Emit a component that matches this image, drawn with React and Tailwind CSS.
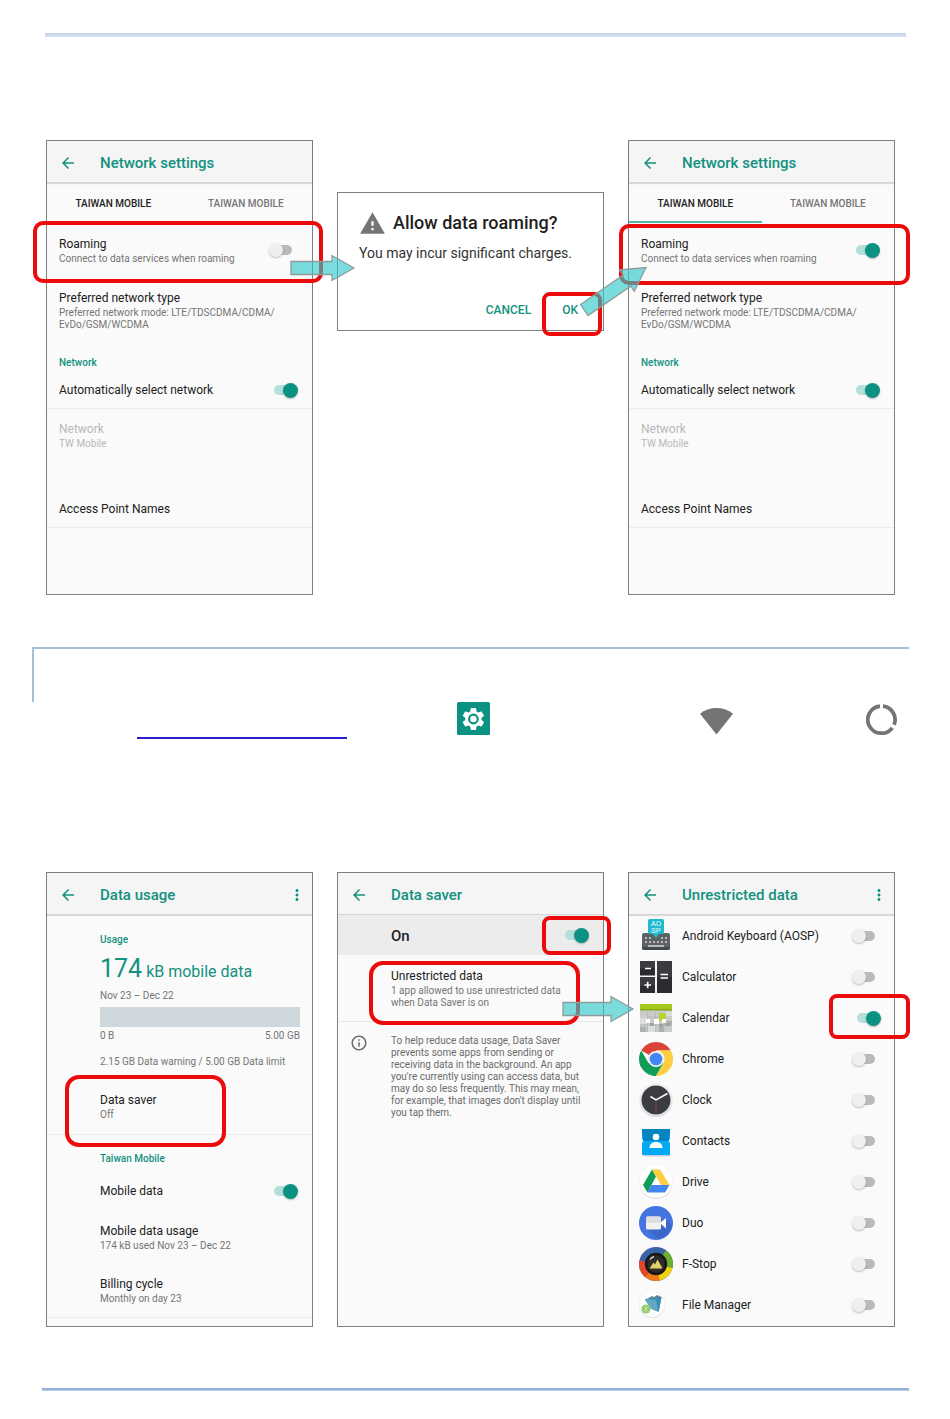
import React, { useState } from "react";
import { MdArrowBack, MdMoreVert, MdWarning, MdInfoOutline } from "react-icons/md";

const Switch = ({ on = false, label }) => {
  const [checked, setChecked] = useState(on);

  return (
    <input
      type="checkbox"
      role="switch"
      aria-label={label}
      checked={checked}
      onChange={(e) => setChecked(e.target.checked)}
      className="relative h-4 w-[30px] shrink-0 appearance-none before:absolute before:left-[5px] before:top-[3px] before:h-[10px] before:w-[18px] before:rounded-full before:bg-[#bababa] before:content-[''] checked:before:bg-[#b5dfda] after:absolute after:left-0 after:top-px after:h-[14px] after:w-[14px] after:rounded-full after:bg-[#efefef] after:shadow-[0_1px_2px_rgba(0,0,0,0.25)] after:content-[''] checked:after:left-[14px] checked:after:h-[15px] checked:after:w-[15px] checked:after:bg-[#0b9283]"
    />
  );
};

// Red frame around the part of the screen to tap
const Callout = ({ className }) => (
  <span className={`pointer-events-none absolute z-10 border-4 border-[#ec0b0b] ${className}`} />
);

const Arrow = ({ className, width, height, points }) => (
  <svg
    className={`pointer-events-none absolute z-20 ${className}`}
    width={width}
    height={height}
    viewBox={`0 0 ${width} ${height}`}
    aria-hidden="true"
  >
    <polygon points={points} fill="#2cc8c8" fillOpacity="0.63" stroke="#8f9c9c" strokeWidth="1.3" />
  </svg>
);

const Screen = ({ title, menu, children }) => (
  <section className="relative border border-[#7f7f7f] bg-[#fafafa]">
    <header className="flex h-[42px] items-center border-b border-[#d6d6d6] bg-[#f5f5f5] pl-3 pr-[6px] pt-[2px] text-[#12917f] shadow-[0_1px_1px_rgba(0,0,0,0.12)]">
      <button type="button" aria-label="Back">
        <MdArrowBack size={18} />
      </button>
      <h2 className="ml-[23px] flex-1 text-[15px] font-medium leading-5">{title}</h2>
      {menu && (
        <button type="button" aria-label="More options">
          <MdMoreVert size={18} />
        </button>
      )}
    </header>
    {children}
  </section>
);

const Item = ({ title, sub, muted }) => (
  <span className="block flex-1">
    <span className={`block text-[12px] leading-4 ${muted ? "text-[#b8b8b8]" : "text-[#212121]"}`}>{title}</span>
    {sub && (
      <span className={`mt-px block text-[10px] leading-3 ${muted ? "text-[#b8b8b8]" : "text-[#757575]"}`}>{sub}</span>
    )}
  </span>
);

const NetworkSettings = ({ roaming, underline, callout, children }) => (
  <Screen title="Network settings">
    <div className="flex h-10 text-[10px]" role="tablist">
      <button
        type="button"
        role="tab"
        aria-selected="true"
        className={`flex-1 border-b-2 pt-[3px] font-medium text-[#212121] ${underline ? "border-[#55b3a8]" : "border-transparent"}`}
      >
        TAIWAN MOBILE
      </button>
      <button
        type="button"
        role="tab"
        aria-selected="false"
        className="flex-1 border-b-2 border-transparent pt-[3px] font-medium text-[#757575]"
      >
        TAIWAN MOBILE
      </button>
    </div>
    <label className="relative flex h-[54px] items-center pl-3 pr-[13px]">
      <Item title="Roaming" sub="Connect to data services when roaming" />
      <Switch on={roaming} label="Roaming" />
      <Callout className={callout} />
      {children}
    </label>
    <div className="flex h-[66px] items-center px-3">
      <Item
        title="Preferred network type"
        sub={
          <>
            Preferred network mode: LTE/TDSCDMA/CDMA/
            <br />
            EvDo/GSM/WCDMA
          </>
        }
      />
    </div>
    <h3 className="px-3 pt-3 text-[10px] font-medium leading-4 text-[#12917f]">Network</h3>
    <label className="flex h-[38px] items-center border-b border-[#ececec] pl-3 pr-[13px]">
      <Item title="Automatically select network" />
      <Switch on label="Automatically select network" />
    </label>
    <div className="flex h-[52px] items-center px-3">
      <Item title="Network" sub="TW Mobile" muted />
    </div>
    <div className="mb-[66px] mt-[30px] flex h-[37px] items-center border-b border-[#ececec] px-3">
      <Item title="Access Point Names" />
    </div>
  </Screen>
);

const RoamingDialog = () => (
  <section className="relative mt-[52px] self-start border border-[#7f7f7f] bg-white pb-3 pl-[21px] pt-4">
    <div className="flex items-center gap-[7px]">
      <MdWarning size={27} className="text-[#757575]" />
      <h2 className="text-[18px] font-medium leading-7 text-[#212121]">Allow data roaming?</h2>
    </div>
    <p className="mt-[6px] text-[14px] leading-5 text-[#333333]">You may incur significant charges.</p>
    <div className="mt-[39px] flex justify-end gap-[31px] pr-[25px] text-[12px] font-medium leading-4 text-[#12917f]">
      <button type="button">CANCEL</button>
      <button type="button">OK</button>
    </div>
    <Callout className="-bottom-[6px] right-px h-[44px] w-[60px] rounded-lg" />
    <Arrow
      className="-right-[45px] top-[71px]"
      width={70}
      height={54}
      points="2.5,40.5 45.2,11.1 41.6,5.8 68,3.5 56.3,27.3 52.8,22.1 10,51.5"
    />
  </section>
);

const DataUsage = () => (
  <Screen title="Data usage" menu>
    <div className="pl-[53px] pr-3 pt-[17px] text-[10px] leading-3 text-[#757575]">
      <h3 className="font-medium leading-4 text-[#12917f]">Usage</h3>
      <p className="mt-2 h-8 whitespace-nowrap text-[16px] leading-8 text-[#12917f]">
        <span className="text-[25px] leading-none">174</span> kB mobile data
      </p>
      <p className="mt-[2px]">Nov 23 – Dec 22</p>
      <div className="mt-[5px] h-5 bg-[#cfd8dc]" />
      <div className="mt-[3px] flex justify-between">
        <span>0 B</span>
        <span>5.00 GB</span>
      </div>
      <p className="mt-[14px] whitespace-nowrap">2.15 GB Data warning / 5.00 GB Data limit</p>
    </div>
    <div className="relative mt-[10px] flex h-[57px] items-center border-b border-[#ececec] pl-[53px]">
      <Item title="Data saver" sub="Off" />
      <Callout className="-bottom-[13px] -top-[3px] left-[18px] w-[161px] rounded-[14px]" />
    </div>
    <h3 className="pb-[5px] pl-[53px] pt-4 text-[10px] font-medium leading-4 text-[#12917f]">Taiwan Mobile</h3>
    <label className="flex h-[38px] items-center pl-[53px] pr-[13px]">
      <Item title="Mobile data" />
      <Switch on label="Mobile data" />
    </label>
    <div className="flex h-[54px] items-center pl-[53px]">
      <Item title="Mobile data usage" sub="174 kB used Nov 23 – Dec 22" />
    </div>
    <div className="mb-2 flex h-[54px] items-center border-b border-[#ececec] pl-[53px]">
      <Item title="Billing cycle" sub="Monthly on day 23" />
    </div>
  </Screen>
);

const DataSaver = () => (
  <Screen title="Data saver">
    <label className="relative flex h-10 items-center bg-[#ececec] pl-[53px] pr-[13px]">
      <span className="flex-1 pt-px text-[15px] font-medium leading-5 text-[#212121]">On</span>
      <Switch on label="Data saver" />
      <Callout className="-right-2 bottom-0 top-px w-[69px] rounded-lg" />
    </label>
    <div className="relative flex h-[67px] items-center border-b border-[#e6e6e6] pl-[53px]">
      <Item
        title="Unrestricted data"
        sub={
          <>
            1 app allowed to use unrestricted data
            <br />
            when Data Saver is on
          </>
        }
      />
      <Callout className="-bottom-1 left-[31px] right-[23px] top-[6px] rounded-[14px]" />
      <Arrow
        className="-right-[32px] top-[40px]"
        width={73}
        height={28}
        points="1,7.5 49,7.5 49,1.5 71,14 49,26.5 49,20.5 1,20.5"
      />
    </div>
    <div className="flex items-start gap-[23px] pl-3 pt-[13px] text-[#6b6b6b]">
      <MdInfoOutline size={18} className="-mt-px shrink-0" />
      <p className="text-[10px] leading-3">
        To help reduce data usage, Data Saver
        <br />
        prevents some apps from sending or
        <br />
        receiving data in the background. An app
        <br />
        you're currently using can access data, but
        <br />
        may do so less frequently. This may mean,
        <br />
        for example, that images don't display until
        <br />
        you tap them.
      </p>
    </div>
  </Screen>
);

const icons = {
  keyboard: (
    <>
      <rect x="3" y="14" width="28" height="17" rx="2" fill="#5d6163" />
      <path d="M3 28h28v1a2 2 0 0 1-2 2H5a2 2 0 0 1-2-2z" fill="#46494b" />
      <g fill="#b4b8ba">
        <path d="M6 18h2v2H6zM10 18h2v2h-2zM22 18h2v2h-2zM26 18h2v2h-2zM6 22h2v2H6zM10 22h2v2h-2zM14 22h2v2h-2zM18 22h2v2h-2zM22 22h2v2h-2zM26 22h2v2h-2z" />
        <rect x="9" y="26" width="16" height="2" />
      </g>
      <path d="M11 0h12a2 2 0 0 1 2 2v11a2 2 0 0 1-2 2h-3l-3 4-3-4h-3a2 2 0 0 1-2-2V2a2 2 0 0 1 2-2z" fill="#1fb9d0" />
      <g fill="#e6fbff" fontFamily="Roboto, sans-serif" fontSize="8" textAnchor="middle">
        <text x="17" y="7">AO</text>
        <text x="17" y="14">SP</text>
      </g>
    </>
  ),
  calculator: (
    <>
      <rect x="1" y="1" width="32" height="32" fill="#3a3b40" />
      <path d="M1 8h15v8H1zM18 17h15v16H18zM1 26h15v7H1z" fill="#2b2c30" />
      <path d="M16 1h2v32h-2zM1 15.500h15v1.500H1z" fill="#f4f4f4" />
      <path d="M6 8.500h6M5.500 25h6.500M8.700 21.800v6.500M21.500 14.500h7.500M21.500 18h7.500" stroke="#fff" strokeWidth="1.600" />
    </>
  ),
  calendar: (
    <>
      <rect x="1" y="3" width="32" height="28" fill="#c9cbc9" />
      <path d="M1 15h8v8H1zM23 11h10v6H23zM9 24h8v7H9z" fill="#dcdedc" />
      <path d="M1 26h6v5H1zM25 20h8v5h-8zM20 25h5v6h-5z" fill="#aeb1ae" />
      <path d="M1 3h32v6H1z" fill="#a4c81e" />
      <path d="M1 8h32v1.500H1z" fill="#86a714" />
      <path d="M8.500 9v22M16.500 9v22M25 9v22M1 16h32M1 24h32" stroke="#b4b7b4" strokeWidth="0.800" />
      <path d="M20 12h7v8h-7z" fill="#b5d331" />
      <path d="M7 18h4v4H7zM15 18h5v5h-5zM23 18h4v4h-4z" fill="#fff" />
      <path d="M11 22h4v3h-4zM20 23h4v3h-4zM27 22h4v3h-4z" fill="#a0a4a0" />
    </>
  ),
  chrome: (
    <>
      <circle cx="17" cy="17" r="17" fill="#fff" />
      <path d="M17 17 2.280 8.500A17 17 0 0 1 31.720 8.500H17z" fill="#db4437" />
      <path d="M2.280 8.500A17 17 0 0 0 17 34l7.400-12.800L17 17l-7.400 4.200z" fill="#0f9d58" />
      <path d="M31.720 8.500A17 17 0 0 1 17 34l7.400-12.800A8.500 8.500 0 0 0 17 8.500z" fill="#ffcd40" />
      <circle cx="17" cy="17" r="8" fill="#f1f1f1" />
      <circle cx="17" cy="17" r="6.300" fill="#4285f4" />
    </>
  ),
  clock: (
    <>
      <circle cx="17" cy="17.500" r="16.500" fill="#d5d8e0" />
      <circle cx="17" cy="16.500" r="16" fill="#eceef3" />
      <circle cx="17" cy="17" r="14.500" fill="#3b3d42" />
      <path d="M17 17v12" stroke="#a63a3a" strokeWidth="0.900" />
      <path d="m11.500 13.500 5.500 3.500 11.500-6.500" fill="none" stroke="#fff" strokeWidth="1.500" />
    </>
  ),
  contacts: (
    <>
      <path d="M4 29h27v2a1.500 1.500 0 0 1-1.500 1.500h-24A1.500 1.500 0 0 1 4 31z" fill="#c9cbd8" />
      <path d="M3 5h28v26H4a1 1 0 0 1-1-1z" fill="#03a9f4" />
      <path d="M3 6a1 1 0 0 1 1-1h26a1 1 0 0 1 1 1l-1.500 11h-25z" fill="#0283c3" />
      <path d="M4.500 17 3 19v-4zM29.500 17l1.500 2v-4z" fill="#fafafa" />
      <circle cx="17" cy="13" r="3.300" fill="#fff" />
      <path d="M10.500 24c0-4 3-6 6.500-6s6.500 2 6.500 6z" fill="#fff" />
    </>
  ),
  drive: (
    <>
      <circle cx="17" cy="17.500" r="16.500" fill="#dcdcdc" />
      <circle cx="17" cy="16.800" r="16.300" fill="#fff" />
      <path d="M13 4.500 17 11.500 8.500 27.500 4 20z" fill="#0f9d58" />
      <path d="M13 4.500h8L30.500 20h-8.500z" fill="#ffcd40" />
      <path d="M12.500 20h18l-4.500 7.500H8.500z" fill="#4285f4" />
    </>
  ),
  duo: (
    <>
      <circle cx="17" cy="17" r="17" fill="#4374e0" />
      <path d="M27 13 33 19a17 17 0 0 1-13 14L8 23z" fill="#3c68ca" />
      <rect x="7" y="10.500" width="15" height="13" rx="1.500" fill="#f2f2f2" />
      <path d="M7 12a1.500 1.500 0 0 1 1.500-1.500H20a2 2 0 0 1 2 2V17H7z" fill="#dedede" />
      <path d="m21 17 6-5v10.500z" fill="#fff" />
    </>
  ),
  fstop: (
    <>
      <circle cx="17" cy="17" r="17" fill="#3b62a8" />
      <path d="M17 17 27 3.300A17 17 0 0 1 33.500 21z" fill="#6fae2c" />
      <path d="M17 17l16.500 4A17 17 0 0 1 20 33.700z" fill="#f3d50f" />
      <path d="M17 17l4 16.500A17 17 0 0 1 6 30z" fill="#ef7a1b" />
      <path d="M17 17 6 30A17 17 0 0 1 .500 13.500z" fill="#e4472a" />
      <circle cx="17" cy="17" r="11.200" fill="#191919" />
      <circle cx="17" cy="17" r="8.500" fill="#2e2c28" />
      <path d="m10.500 21.500 4-6 1.500 2 2.500-5 5 9z" fill="#e6d06a" />
      <path d="M11 12.500c1-1.800 2.500-2.700 4-3" fill="none" stroke="#d8d8d8" strokeWidth="1.500" />
    </>
  ),
  files: (
    <>
      <circle cx="13" cy="17" r="13" fill="#e4e4e4" />
      <circle cx="13" cy="16.500" r="12.500" fill="#fff" />
      <path d="M6 12 13 8l2 1 3-2 4.500 2L20 23l-8-3z" fill="#6b8795" />
      <path d="M6 11 22.500 9 19.500 24l-7-3z" fill="#3b8fb5" />
      <path d="m6 11 11 1 2 11.500-7-3z" fill="#62a9c6" />
      <circle cx="7" cy="21" r="4.500" fill="#8cc665" />
      <path d="M4 18.500l6 5M10 18.500l-6 5M7 17v8" stroke="#c4e6a8" strokeWidth="0.900" />
    </>
  ),
};

const apps = [
  { name: "Android Keyboard (AOSP)", icon: "keyboard" },
  { name: "Calculator", icon: "calculator" },
  { name: "Calendar", icon: "calendar", on: true },
  { name: "Chrome", icon: "chrome" },
  { name: "Clock", icon: "clock" },
  { name: "Contacts", icon: "contacts" },
  { name: "Drive", icon: "drive" },
  { name: "Duo", icon: "duo" },
  { name: "F-Stop", icon: "fstop" },
  { name: "File Manager", icon: "files" },
];

const UnrestrictedData = () => (
  <Screen title="Unrestricted data" menu>
    <ul className="pb-px">
      {apps.map((app) => (
        <li key={app.name} className="relative">
          <label className="flex h-[41px] items-center pl-[10px] pr-3">
            <svg width="34" height="34" viewBox="0 0 34 34" className="mr-[9px]" aria-hidden="true">
              {icons[app.icon]}
            </svg>
            <Item title={app.name} />
            <Switch on={app.on} label={app.name} />
          </label>
          {app.on && <Callout className="-bottom-[1px] -right-4 -top-[3px] w-[81px] rounded-lg" />}
        </li>
      ))}
    </ul>
  </Screen>
);

const App = () => {
  return (
    <main className="bg-white pb-7 pt-[33px] font-['Roboto',sans-serif]">
      <div className="ml-[45px] mr-[44px] h-1 border-b-2 border-[#d3dff0] bg-[#c6d5ea]" />

      <div className="mt-[103px] grid grid-cols-3 gap-6 pl-[46px] pr-[55px]">
        <NetworkSettings callout="-bottom-[6px] -left-[14px] -right-[11px] -top-[2px] rounded-[10px]">
          <Arrow
            className="-right-[44px] top-[31px]"
            width={66}
            height={28}
            points="1,7.5 42,7.5 42,1.5 64,14 42,26.5 42,20.5 1,20.5"
          />
        </NetworkSettings>
        <RoamingDialog />
        <NetworkSettings roaming underline callout="-bottom-2 -left-[10px] -right-4 top-px rounded-[10px]" />
      </div>

      <div className="ml-8 mr-[41px] mt-[52px] h-[55px] border-l-2 border-t-2 border-[#a3bfdc]" />
      <div className="flex items-start pl-[137px]">
        <a href="#data-saver" aria-label="Data saver" className="h-[37px] w-[210px] border-b-2 border-[#2a1fd0]" />
        <svg width="33" height="33" viewBox="0 0 33 33" className="ml-[110px]" aria-hidden="true">
          <rect width="33" height="33" rx="1.5" fill="#0b9283" />
          <path
            transform="translate(3.300 3.900) scale(1.090)"
            fill="#fff"
            d="M19.43 12.98c.04-.32.07-.64.07-.98s-.03-.66-.07-.98l2.110-1.650c.19-.15.24-.42.12-.64l-2-3.460c-.12-.22-.39-.3-.61-.22l-2.490 1c-.52-.4-1.080-.73-1.690-.98l-.38-2.650C14.460 2.180 14.250 2 14 2h-4c-.25 0-.46.18-.49.42l-.38 2.650c-.61.25-1.170.59-1.690.98l-2.490-1c-.23-.09-.49 0-.61.22l-2 3.460c-.13.22-.07.49.12.64l2.110 1.650c-.04.32-.07.65-.07.98s.03.66.07.98l-2.110 1.650c-.19.15-.24.42-.12.64l2 3.460c.12.22.39.3.61.22l2.490-1c.52.4 1.080.73 1.690.98l.38 2.650c.03.24.24.42.49.42h4c.25 0 .46-.18.49-.42l.38-2.650c.61-.25 1.170-.59 1.690-.98l2.490 1c.23.09.49 0 .61-.22l2-3.460c.12-.22.07-.49-.12-.64l-2.110-1.650z"
          />
          <circle cx="16.400" cy="17" r="4.300" fill="#fff" stroke="#0b9283" strokeWidth="2.200" />
        </svg>
        <svg width="33" height="33" viewBox="0 0 33 33" className="ml-[210px]" aria-hidden="true">
          <path d="M16.500 32.500 0 11.800C4.500 8 10.300 6 16.500 6S28.500 8 33 11.800z" fill="#747474" />
        </svg>
        <svg width="31" height="33" viewBox="0 0 31 33" className="ml-[133px]" aria-hidden="true">
          <g fill="none" stroke="#747474" strokeWidth="3.800">
            <path d="M17 4.100A13.600 13.600 0 0 1 28 22.800" />
            <path d="M14 4.100A13.600 13.600 0 1 0 26.300 25.800" />
          </g>
        </svg>
      </div>

      <div className="mt-[133px] grid grid-cols-3 gap-6 pl-[46px] pr-[55px]">
        <DataUsage />
        <DataSaver />
        <UnrestrictedData />
      </div>

      <div className="ml-[42px] mr-[41px] mt-[61px] h-[3px] border-b border-[#b9cfe8] bg-[#93b3da]" />
    </main>
  );
};

export default App;
